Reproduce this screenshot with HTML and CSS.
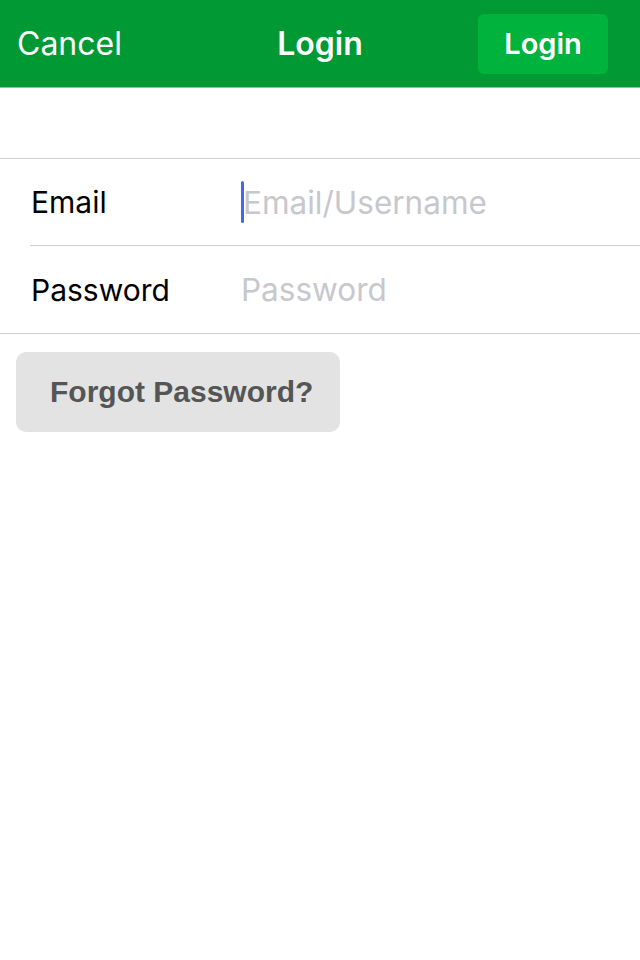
FILE: index.html
```html
<!DOCTYPE html>
<html lang="en">
<head>
    <meta charset="UTF-8">
    <meta name="viewport" content="width=device-width, initial-scale=1.0">
    <title>Login</title>
    <link rel="stylesheet" href="styles.css">
</head>
<body>
    <div class="navbar">
        <div class="nav-cancel">Cancel</div>
        <div class="nav-title">Login</div>
        <div class="nav-right">
            <div class="nav-button">Login</div>
        </div>
    </div>

    <div class="form">
        <div class="row">
            <div class="label">Email</div>
            <div class="field">
                <span class="cursor"></span>
                <span class="placeholder">Email/Username</span>
            </div>
        </div>
        <div class="row">
            <div class="label">Password</div>
            <div class="field">
                <span class="placeholder">Password</span>
            </div>
        </div>
    </div>

    <div class="actions">
        <div class="forgot-button">Forgot Password?</div>
    </div>
</body>
</html>
```

FILE: styles.css
```css
body {
    margin: 0;
    padding: 0;
    background-color: #fff;
    font-family: 'Inter', 'Roboto', sans-serif;
    color: #000;
}
.navbar {
    display: grid;
    grid-template-columns: 1fr auto 1fr;
    align-items: center;
    height: 88px;
    padding: 0 17px;
    background-color: #009933;
    border-bottom: 1px solid #b0b0b0;
    box-sizing: border-box;
    color: #fff;
}
.nav-cancel {
    font-size: 32px;
    font-weight: 400;
}
.nav-title {
    font-size: 32px;
    font-weight: 600;
}
.nav-right {
    display: flex;
    justify-content: flex-end;
}
.nav-button {
    width: 130px;
    height: 60px;
    margin-right: 15px;
    line-height: 60px;
    text-align: center;
    background-color: #00b33c;
    border-radius: 6px;
    font-size: 29px;
    font-weight: 600;
}
.form {
    margin-top: 70px;
    border-top: 1px solid #cfcfcf;
    border-bottom: 1px solid #cfcfcf;
}
.row {
    display: flex;
    align-items: center;
    height: 86px;
    margin-left: 30px;
}
.row + .row {
    height: 87px;
    border-top: 1px solid #cfcfcf;
}
.label {
    width: 210px;
    padding-left: 1px;
    font-size: 30px;
}
.field {
    display: flex;
    align-items: center;
    font-size: 31.5px;
}
.cursor {
    width: 3px;
    height: 42px;
    margin-right: -1px;
    background-color: #4466f2;
    border-radius: 2px;
}
.placeholder {
    color: #c7c7cd;
}
.actions {
    padding: 18px 16px;
}
.forgot-button {
    width: 324px;
    height: 80px;
    line-height: 80px;
    box-sizing: border-box;
    padding-left: 34px;
    background-color: #e3e3e3;
    border-radius: 10px;
    color: #555;
    font-family: 'Liberation Sans', Arial, sans-serif;
    font-size: 30px;
    font-weight: bold;
}
```
